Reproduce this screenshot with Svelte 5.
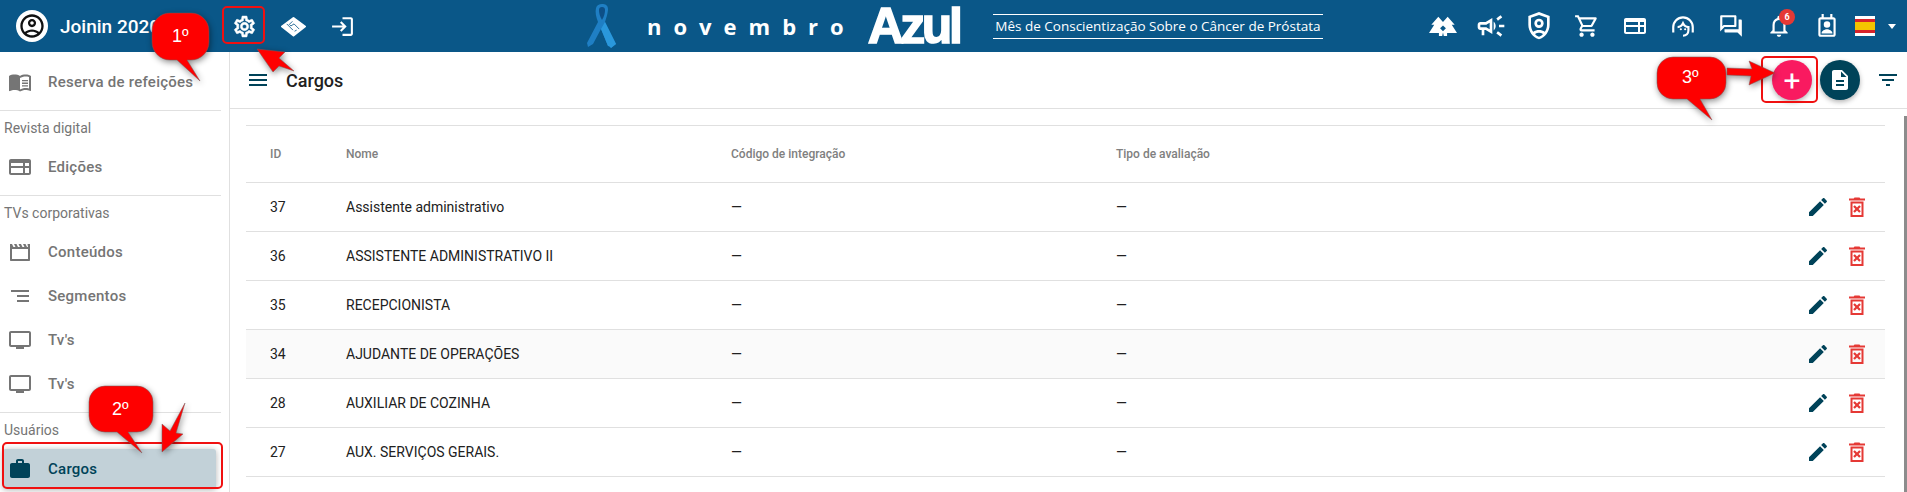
<script>
  const rows = [
    { id: 37, nome: 'Assistente administrativo' },
    { id: 36, nome: 'ASSISTENTE ADMINISTRATIVO II' },
    { id: 35, nome: 'RECEPCIONISTA' },
    { id: 34, nome: 'AJUDANTE DE OPERAÇÕES', hover: true },
    { id: 28, nome: 'AUXILIAR DE COZINHA' },
    { id: 27, nome: 'AUX. SERVIÇOS GERAIS.' }
  ];

  const icons = {
    book: 'M21 5c-1.1-.35-2.3-.5-3.5-.5-1.95 0-4.05.4-5.5 1.5-1.45-1.1-3.55-1.500-5.500-1.500S2.450 4.900 1 6v14.650c0 .25.25.5.5.5.1 0 .15-.05.25-.05C3.100 20.450 5.050 20 6.500 20c1.950 0 4.050.4 5.500 1.500 1.350-.85 3.800-1.500 5.500-1.500 1.650 0 3.350.3 4.750 1.050.1.05.15.05.25.05.25 0 .5-.25.5-.5V6c-.6-.45-1.250-.75-2-1zm0 13.500c-1.100-.35-2.300-.5-3.500-.5-1.700 0-4.150.65-5.500 1.500V8c1.350-.85 3.800-1.500 5.500-1.500 1.200 0 2.400.15 3.500.5v11.500zM14 9.900h6v1.400h-6zm0 2.700h6V14h-6zm0 2.600h6v1.400h-6z',
    news: 'M21 4H3c-1.100 0-2 .9-2 2v12c0 1.100.9 2 2 2h18c1.100 0 2-.9 2-2V6c0-1.100-.9-2-2-2zM3 11V8h12v3H3zm0 2h12v5H3v-5zm18 5h-4v-5h4v5zm0-7h-4V8h4v3z',
    movie: 'M2 4h2l1.500 3h2L6 4h2.500L10 7h2l-1.500-3H13l1.500 3h2L15 4h2.500L19 7h1l-.5-3H22v16c0 .6-.4 1-1 1H3c-.6 0-1-.4-1-1V4zm2 5v10h16V9H4z',
    sort: 'M3 6h18v2H3zm6 5h12v2H9zm0 5h12v2H9z',
    tv: 'M21 3H3c-1.100 0-2 .9-2 2v12c0 1.100.9 2 2 2h5v2h8v-2h5c1.100 0 1.990-.9 1.990-2L23 5c0-1.100-.9-2-2-2zm0 14H3V5h18v12z',
    work: 'M20 6h-4V4c0-1.110-.89-2-2-2h-4c-1.110 0-2 .89-2 2v2H4c-1.110 0-1.990.89-1.990 2L2 19c0 1.110.89 2 2 2h16c1.110 0 2-.89 2-2V8c0-1.110-.89-2-2-2zm-6 0h-4V4h4v2z',
    edit: 'M3 17.250V21h3.750L17.810 9.940l-3.750-3.750L3 17.250zM20.710 7.040c.39-.39.39-1.020 0-1.410l-2.340-2.340c-.39-.39-1.020-.39-1.410 0l-1.830 1.830 3.750 3.750 1.830-1.830z',
    trash: 'M9.500 2.500h5l.8 1H20v2H4v-2h4.700l.8-1zM5.500 6.500h13V22h-13V6.500zm2 2V20h9V8.500h-9zm2.300 1.700L12 12.400l2.200-2.200 1.600 1.600-2.200 2.200 2.200 2.200-1.600 1.600-2.200-2.200-2.200 2.200-1.600-1.600 2.200-2.200-2.200-2.200 1.600-1.600z',
    filter: 'M10 18h4v-2h-4v2zM3 6v2h18V6H3zm3 7h12v-2H6v2z',
    doc: 'M14 2H6c-1.100 0-2 .9-2 2v16c0 1.100.9 2 2 2h12c1.100 0 2-.9 2-2V8l-6-6zM8 18v-2h8v2H8zm0-4v-2h8v2H8zm5-5V3.500L18.500 9H13z',
    user: 'M12 2C6.480 2 2 6.480 2 12s4.480 10 10 10 10-4.480 10-10S17.520 2 12 2zM7.350 18.500C8.660 17.560 10.260 17 12 17s3.340.56 4.650 1.500c-1.310.94-2.910 1.500-4.650 1.500s-3.340-.56-4.650-1.500zm10.790-1.380C16.450 15.800 14.320 15 12 15s-4.450.8-6.140 2.120C4.700 15.730 4 13.950 4 12c0-4.420 3.580-8 8-8s8 3.580 8 8c0 1.950-.7 3.730-1.860 5.120zM12 6c-1.930 0-3.500 1.570-3.500 3.500S10.070 13 12 13s3.500-1.570 3.500-3.500S13.930 6 12 6zm0 5c-.83 0-1.500-.67-1.500-1.500S11.170 8 12 8s1.500.67 1.500 1.500S12.830 11 12 11z',
    gear: 'M19.430 12.980c.04-.32.07-.64.07-.98 0-.34-.03-.66-.07-.98l2.110-1.650c.19-.15.24-.42.12-.64l-2-3.460c-.09-.16-.26-.25-.44-.25-.06 0-.12.01-.17.03l-2.490 1c-.52-.4-1.080-.73-1.690-.98l-.38-2.650C14.460 2.180 14.250 2 14 2h-4c-.25 0-.46.18-.49.42l-.38 2.650c-.61.25-1.170.59-1.690.98l-2.490-1c-.06-.02-.12-.03-.18-.03-.17 0-.34.09-.43.25l-2 3.460c-.13.22-.07.49.12.64l2.110 1.650c-.04.32-.07.65-.07.98 0 .33.03.66.07.98l-2.110 1.650c-.19.15-.24.42-.12.64l2 3.460c.09.16.26.25.44.25.06 0 .12-.01.17-.03l2.490-1c.52.4 1.080.73 1.690.98l.38 2.650c.03.24.24.42.49.42h4c.25 0 .46-.18.49-.42l.38-2.650c.61-.25 1.170-.59 1.690-.98l2.490 1c.06.02.12.03.18.03.17 0 .34-.09.43-.25l2-3.460c.12-.22.07-.49-.12-.64l-2.110-1.650zm-1.980-1.710c.04.31.05.52.05.73 0 .21-.02.43-.05.73l-.14 1.130.89.7 1.080.84-.7 1.210-1.270-.51-1.040-.42-.9.68c-.43.32-.84.56-1.250.73l-1.060.43-.16 1.130-.2 1.350h-1.400l-.19-1.350-.16-1.130-1.060-.43c-.43-.18-.83-.41-1.230-.71l-.91-.7-1.060.43-1.270.51-.7-1.210 1.080-.84.89-.7-.14-1.130c-.03-.31-.05-.54-.05-.74s.02-.43.05-.73l.14-1.130-.89-.7-1.080-.84.7-1.210 1.270.51 1.040.42.9-.68c.43-.32.84-.56 1.250-.73l1.060-.43.16-1.130.2-1.350h1.390l.19 1.350.16 1.130 1.060.43c.43.18.83.41 1.230.71l.91.7 1.060-.43 1.270-.51.7 1.210-1.070.85-.89.7.14 1.130zM12 8c-2.210 0-4 1.790-4 4s1.790 4 4 4 4-1.790 4-4-1.790-4-4-4zm0 6c-1.100 0-2-.9-2-2s.9-2 2-2 2 .9 2 2-.9 2-2 2z',
    login: 'M11 7L9.600 8.400l2.600 2.600H2v2h10.200l-2.600 2.600L11 17l5-5-5-5zm9 12h-8v2h8c1.100 0 2-.9 2-2V5c0-1.100-.9-2-2-2h-8v2h8v14z',
    arrows: 'M8 4l4 4.500L16 4l6 7h-2.500l4.500 7h-8.500v2.500h-2.800L12 17.500l-.7 3H8.500V18H0l4.500-7H2l6-7zm4 7.500L9.500 14l2.500 2.500 2.500-2.500-2.500-2.500z',
    campaign: 'M18 11v2h4v-2h-4zm-2 6.610c.96.71 2.210 1.650 3.200 2.390.4-.53.8-1.070 1.200-1.600-.99-.74-2.240-1.680-3.200-2.400-.4.54-.8 1.080-1.200 1.610zM20.400 5.600c-.4-.53-.8-1.070-1.200-1.600-.99.74-2.240 1.680-3.200 2.400.4.53.8 1.070 1.200 1.600.96-.72 2.210-1.650 3.200-2.400zM4 9c-1.100 0-2 .9-2 2v2c0 1.100.9 2 2 2h1v4h2v-4h1l5 3V6L8 9H4zm5.030 1.710L11 9.530v4.940l-1.970-1.180-.48-.29H4v-2h4.550l.48-.29zM15.500 12c0-1.330-.58-2.530-1.500-3.350v6.690c.92-.81 1.500-2.010 1.500-3.340z',
    shield: 'M12 1.500L4 4.500V11c0 5 3.400 9.700 8 11 4.600-1.300 8-6 8-11V4.500l-8-3zm6 9.500c0 1.900-.6 3.800-1.600 5.300-1.300-.8-2.800-1.300-4.400-1.300s-3.100.5-4.400 1.300C6.600 14.800 6 12.900 6 11V5.900l6-2.200 6 2.200V11zM12 6.500a3.500 3.500 0 1 0 0 7 3.500 3.500 0 0 0 0-7zm0 5a1.500 1.500 0 1 1 0-3 1.500 1.500 0 0 1 0 3zM9 18c.9-.5 1.900-.9 3-.9s2.100.4 3 .9c-.8 1-1.900 1.700-3 2-1.100-.3-2.200-1-3-2z',
    cart: 'M15.550 13c.75 0 1.410-.41 1.750-1.030l3.580-6.490c.37-.66-.11-1.480-.87-1.480H5.210l-.94-2H1v2h2l3.600 7.590-1.350 2.440C4.520 15.370 5.480 17 7 17h12v-2H7l1.100-2h7.450zM6.160 6h12.150l-2.760 5H8.530L6.160 6zM7 18c-1.100 0-1.990.9-1.990 2S5.900 22 7 22s2-.9 2-2-.9-2-2-2zm10 0c-1.100 0-1.990.9-1.990 2s.89 2 1.990 2 2-.9 2-2-.9-2-2-2z',
    forum: 'M15 4v7H5.170L4 12.170V4h11m1-2H3c-.55 0-1 .45-1 1v14l4-4h10c.55 0 1-.45 1-1V3c0-.55-.45-1-1-1zm5 4h-2v9H6v2c0 .55.45 1 1 1h11l4 4V7c0-.55-.45-1-1-1z',
    bell: 'M12 22c1.100 0 2-.9 2-2h-4c0 1.100.9 2 2 2zm6-6v-5c0-3.070-1.630-5.640-4.500-6.320V4c0-.83-.67-1.500-1.500-1.500s-1.500.67-1.500 1.500v.68C7.640 5.360 6 7.920 6 11v5l-2 2v1h16v-1l-2-2zm-2 1H8v-6c0-2.480 1.510-4.500 4-4.500s4 2.020 4 4.500v6z',
    badge: 'M7 1h2v3h6V1h2v3h1c1.100 0 2 .9 2 2v14c0 1.100-.9 2-2 2H6c-1.100 0-2-.9-2-2V6c0-1.100.9-2 2-2h1V1zM6 6v14h12V6H6zm6 1.500a3 3 0 1 1 0 6 3 3 0 0 1 0-6zm-5 11c0-2 3-3.500 5-3.500s5 1.500 5 3.500v.5H7v-.5z'
  };

  const topIcons = ['arrows', 'campaign', 'shield', 'cart', 'news', 'support', 'forum', 'bell', 'badge'];
</script>

<div class="page">
  <header class="topbar">
    <div class="brand">
      <span class="avatar"><svg viewBox="0 0 24 24"><path d={icons.user} /></svg></span>
      <span class="brand-name">Joinin 2020</span>
    </div>
    <div class="top-left-icons">
      <svg viewBox="0 0 24 24"><path d={icons.gear} stroke="#fff" stroke-width="0.5" /></svg>
      <svg viewBox="0 0 24 24">
        <path d="M12 4L23 12 12 20.500 1 12z" stroke="#fff" stroke-width="2" stroke-linejoin="round" />
        <path d="M5.500 9.500l6 6M11 7l-3 3 1.500 1.500 3-2 5 5M13 16.500l2-1" fill="none" stroke="#0a5788" stroke-width="0.8" />
      </svg>
      <svg viewBox="0 0 24 24"><path d={icons.login} /></svg>
    </div>
    <div class="banner">
      <svg class="ribbon" viewBox="0 0 32 46">
        <path d="M15 1c3 0 6 1 6 5 0 4-2 10-3 13l11 22-5 4c-1-1-1-2-3-2L14 26 6 41l-5 3 -1-4 11-21C9 14 8 9 9 5c1-3 3-4 6-4z" fill="#1f7fc4" />
        <path d="M15 4c2 0 3 1 3 3 0 3-1 7-3 10-2-3-3-7-3-10 0-2 1-3 3-3z" fill="#0d4f87" />
        <path d="M18 19l11 22-5 4c-1-1-1-2-3-2L14 26z" fill="#2a98dc" />
      </svg>
      <span class="novembro">novembro</span>
      <span class="azul">Azul</span>
      <span class="slogan">Mês de Conscientização Sobre o Câncer de Próstata</span>
    </div>
    <div class="top-right-icons">
      {#each topIcons as name}
        <span class="top-icon i-{name}">
          {#if name === 'support'}
            <svg viewBox="0 0 24 24">
              <path d="M3 18v-5a9 9 0 0 1 18 0v5" fill="none" stroke="#fff" stroke-width="2" />
              <path d="M7 13c2.500 0 4-1.500 5-3.500 1 2 2.500 3.500 5 3.500v3c0 3-2 5-5 5" fill="none" stroke="#fff" stroke-width="2" />
              <circle cx="10" cy="15" r="1" />
              <circle cx="14" cy="15" r="1" />
            </svg>
          {:else}
            <svg viewBox="0 0 24 24"><path d={icons[name]} fill-rule="evenodd" /></svg>
          {/if}
          {#if name === 'bell'}<span class="badge-count">6</span>{/if}
        </span>
      {/each}
      <span class="flag"><span class="flag-mid"></span></span>
      <span class="caret"></span>
    </div>
  </header>

  <div class="body">
    <aside class="sidebar">
      <a class="item"><svg viewBox="0 0 24 24"><path d={icons.book} fill-rule="evenodd" /></svg>Reserva de refeições</a>
      <hr />
      <div class="group">Revista digital</div>
      <a class="item"><svg viewBox="0 0 24 24"><path d={icons.news} fill-rule="evenodd" /></svg>Edições</a>
      <hr />
      <div class="group">TVs corporativas</div>
      <a class="item"><svg viewBox="0 0 24 24"><path d={icons.movie} fill-rule="evenodd" /></svg>Conteúdos</a>
      <a class="item"><svg viewBox="0 0 24 24"><path d={icons.sort} /></svg>Segmentos</a>
      <a class="item"><svg viewBox="0 0 24 24"><path d={icons.tv} fill-rule="evenodd" /></svg>Tv's</a>
      <a class="item"><svg viewBox="0 0 24 24"><path d={icons.tv} fill-rule="evenodd" /></svg>Tv's</a>
      <hr />
      <div class="group">Usuários</div>
      <a class="item selected"><svg viewBox="0 0 24 24"><path d={icons.work} fill-rule="evenodd" /></svg>Cargos</a>
    </aside>

    <main class="content">
      <div class="toolbar">
        <svg class="menu" viewBox="0 0 24 24"><path d="M3 18h18v-2H3v2zm0-5h18v-2H3v2zm0-7v2h18V6H3z" /></svg>
        <h1>Cargos</h1>
        <span class="fab plus">+</span>
        <span class="fab doc"><svg viewBox="0 0 24 24"><path d={icons.doc} fill-rule="evenodd" /></svg></span>
        <svg class="filter" viewBox="0 0 24 24"><path d={icons.filter} /></svg>
      </div>

      <div class="table-wrap">
        <table>
          <thead>
            <tr><th class="c-id">ID</th><th class="c-nome">Nome</th><th class="c-cod">Código de integração</th><th>Tipo de avaliação</th><th class="c-act"></th></tr>
          </thead>
          <tbody>
            {#each rows as row}
              <tr class:hover={row.hover}>
                <td>{row.id}</td>
                <td>{row.nome}</td>
                <td>—</td>
                <td>—</td>
                <td class="actions">
                  <svg class="edit" viewBox="0 0 24 24"><path d={icons.edit} /></svg>
                  <svg class="trash" viewBox="0 0 24 24"><path d={icons.trash} fill-rule="evenodd" /></svg>
                </td>
              </tr>
            {/each}
          </tbody>
        </table>
      </div>
    </main>
  </div>

  <!-- setas e balões do tutorial por cima da tela -->
  <div class="mark mark-gear"></div>
  <div class="mark mark-cargos"></div>
  <div class="mark mark-plus"></div>

  <svg class="arrows-layer" viewBox="0 0 1907 492">
    <g fill="#fe0000" stroke="#7a5a5a" stroke-width="0.5" class="shadowed">
      <path d="M257 49l28 3-6 6 15 13-15-5-6 6z" />
      <path d="M162 452v-28l8 7 15-28-9 30 7 1z" />
      <path d="M1727 68l25 1-3-8 26 12-26 12 2-9-24-1z" />
      <path d="M170 13h21a18 18 0 0 1 18 18v11a18 18 0 0 1-18 18h-4l13 21-23-21h-7a18 18 0 0 1-18-18V31a18 18 0 0 1 18-18z" />
      <path d="M105 386h32a16 16 0 0 1 16 16v14a16 16 0 0 1-16 16h-9l14 21-25-21h-12a16 16 0 0 1-16-16v-14a16 16 0 0 1 16-16z" />
      <path d="M1673 57h37a16 16 0 0 1 16 16v10a16 16 0 0 1-16 16h-10l12 21-25-21h-14a16 16 0 0 1-16-16V73a16 16 0 0 1 16-16z" />
    </g>
  </svg>
  <span class="bubble-text b1">1º</span>
  <span class="bubble-text b2">2º</span>
  <span class="bubble-text b3">3º</span>

  <div class="scrollbar"></div>
</div>

<style>
  :global(body) {
    margin: 0;
    background: #fff;
    font-family: Roboto, "Liberation Sans", sans-serif;
  }

  .page {
    position: relative;
    width: 1907px;
    height: 492px;
    overflow: hidden;
  }

  .topbar {
    height: 52px;
    background: #0a5788;
    display: flex;
    align-items: center;
    color: #fff;
  }

  .brand {
    display: flex;
    align-items: center;
    width: 222px;
    padding-left: 16px;
    box-sizing: border-box;
    flex: none;
  }

  .avatar {
    width: 32px;
    height: 32px;
    border-radius: 50%;
    background: #fff;
    display: flex;
    align-items: center;
    justify-content: center;
    flex: none;
  }

  .avatar svg {
    width: 28px;
    height: 28px;
    fill: #111;
  }

  .brand-name {
    margin-left: 12px;
    font-size: 19px;
    font-weight: 500;
    white-space: nowrap;
  }

  .top-left-icons {
    display: flex;
    gap: 24px;
    padding-left: 10px;
    width: 130px;
    flex: none;
    box-sizing: content-box;
    margin-right: -10px;
  }

  .top-left-icons svg {
    width: 25px;
    height: 25px;
    fill: #fff;
  }

  .banner {
    display: flex;
    align-items: center;
    margin-left: 235px;
    flex: none;
    height: 52px;
  }

  .ribbon {
    width: 32px;
    height: 46px;
    flex: none;
  }

  .novembro {
    margin-left: 28px;
    font-family: "Open Sans", sans-serif;
    font-weight: 700;
    font-size: 22px;
    letter-spacing: 12px;
    flex: none;
  }

  .azul {
    margin-left: 12px;
    font-family: "Liberation Sans", sans-serif;
    font-weight: 700;
    font-size: 50px;
    letter-spacing: -3.500px;
    -webkit-text-stroke: 1.500px #fff;
    line-height: 52px;
    flex: none;
  }

  .slogan {
    margin-left: 34px;
    font-family: "Open Sans", sans-serif;
    font-size: 13.500px;
    line-height: 23px;
    padding: 0 2px;
    border-top: 1px solid #fff;
    border-bottom: 1px solid #fff;
    white-space: nowrap;
    flex: none;
  }

  .top-right-icons {
    margin-left: auto;
    display: flex;
    align-items: center;
    padding-right: 11px;
    flex: none;
  }

  .top-icon {
    position: relative;
    width: 48px;
    height: 32px;
    display: flex;
    align-items: center;
    justify-content: center;
  }

  .top-icon svg {
    width: 26px;
    height: 26px;
    fill: #fff;
  }

  .i-arrows svg {
    width: 28px;
    height: 28px;
  }

  .i-campaign svg,
  .i-shield svg {
    width: 32px;
    height: 32px;
  }

  .i-news svg {
    width: 24px;
    height: 24px;
  }

  .badge-count {
    position: absolute;
    top: -1px;
    left: 24px;
    width: 16px;
    height: 16px;
    border-radius: 50%;
    background: #e53935;
    font-size: 9px;
    font-weight: 700;
    line-height: 16px;
    text-align: center;
  }

  .flag {
    width: 20px;
    height: 20px;
    box-sizing: border-box;
    background: #d8232a;
    display: flex;
    align-items: center;
    margin-left: 4px;
    border: solid #fff;
    border-width: 3px 0;
  }

  .flag-mid {
    display: block;
    width: 100%;
    height: 8px;
    background: #f5c400;
  }

  .caret {
    margin-left: 13px;
    border: 4.500px solid transparent;
    border-top: 5px solid #fff;
    border-bottom: 0;
  }

  .body {
    display: flex;
    height: 440px;
  }

  .sidebar {
    width: 230px;
    flex: none;
    box-sizing: border-box;
    padding: 8px 8px 0 0;
    border-right: 1px solid #e0e0e0;
  }

  .sidebar hr {
    margin: 6px 0 0;
    border: 0;
    border-top: 1px solid #e0e0e0;
  }

  .group {
    height: 34px;
    line-height: 34px;
    padding-left: 4px;
    font-size: 14px;
    color: #757575;
  }

  .item {
    height: 44px;
    display: flex;
    align-items: center;
    font-size: 15px;
    font-weight: 500;
    letter-spacing: 0.25px;
    color: #757575;
  }

  .item svg {
    width: 24px;
    height: 24px;
    margin: 0 16px 0 8px;
    fill: #757575;
    flex: none;
  }

  .selected {
    height: 40px;
    margin: 2px 5px 0 3px;
    background: #c2d1d8;
    border-radius: 3px;
    color: #004359;
    box-shadow: 0 1px 6px rgba(0, 0, 0, 0.3);
  }

  .selected svg {
    fill: #004359;
    margin-left: 5px;
  }

  .content {
    flex: 1;
    min-width: 0;
  }

  .toolbar {
    height: 56px;
    border-bottom: 1px solid #e0e0e0;
    display: flex;
    align-items: center;
    padding-left: 16px;
    padding-right: 7px;
  }

  .menu {
    width: 24px;
    height: 24px;
    fill: #004359;
  }

  h1 {
    margin: 0 0 0 16px;
    font-size: 18px;
    font-weight: 500;
    color: #212121;
    flex: 1;
  }

  .fab {
    width: 40px;
    height: 40px;
    border-radius: 50%;
    display: flex;
    align-items: center;
    justify-content: center;
    box-shadow: 0 2px 5px rgba(0, 0, 0, 0.3);
    flex: none;
  }

  .plus {
    background: #f91a60;
    color: #fff;
    font-size: 30px;
    font-weight: 400;
  }

  .doc {
    background: #004359;
    margin-left: 8px;
  }

  .doc svg {
    width: 24px;
    height: 24px;
    fill: #fff;
  }

  .filter {
    width: 24px;
    height: 24px;
    fill: #004359;
    margin-left: 16px;
  }

  .table-wrap {
    padding: 16px 22px 0 16px;
  }

  table {
    width: 100%;
    border-collapse: collapse;
    border-top: 1px solid #e0e0e0;
    table-layout: fixed;
  }

  th {
    height: 56px;
    padding: 0;
    text-align: left;
    font-size: 12px;
    font-weight: 500;
    color: #808080;
  }

  th:first-child,
  td:first-child {
    padding-left: 24px;
  }

  .c-id {
    width: 100px;
    box-sizing: border-box;
  }

  .c-nome,
  .c-cod {
    width: 385px;
  }

  .c-act {
    width: 110px;
  }

  tr {
    border-bottom: 1px solid #e0e0e0;
  }

  td {
    height: 48px;
    padding: 0;
    font-size: 14px;
    color: #212121;
  }

  tr.hover {
    background: #fafafa;
  }

  .actions {
    text-align: right;
    padding-right: 16px;
  }

  .actions svg {
    vertical-align: middle;
  }

  .edit {
    width: 24px;
    height: 24px;
    fill: #004359;
  }

  .trash {
    width: 24px;
    height: 24px;
    fill: #e53935;
    margin-left: 12px;
  }

  .mark {
    position: absolute;
    box-sizing: border-box;
    border: 2px solid #f01010;
    border-radius: 5px;
  }

  .mark-gear {
    left: 222px;
    top: 6px;
    width: 43px;
    height: 38px;
  }

  .mark-cargos {
    left: 2px;
    top: 442px;
    width: 221px;
    height: 47px;
  }

  .mark-plus {
    left: 1761px;
    top: 56px;
    width: 57px;
    height: 47px;
  }

  .arrows-layer {
    position: absolute;
    left: 0;
    top: 0;
    width: 1907px;
    height: 492px;
    pointer-events: none;
  }

  .shadowed {
    filter: drop-shadow(1px 2px 3px rgba(0, 0, 0, 0.45));
  }

  .bubble-text {
    position: absolute;
    color: #fff;
    font-family: "Liberation Sans", sans-serif;
    font-size: 18px;
  }

  .b1 {
    left: 172px;
    top: 26px;
  }

  .b2 {
    left: 112px;
    top: 399px;
  }

  .b3 {
    left: 1682px;
    top: 67px;
  }

  .scrollbar {
    position: absolute;
    right: 0;
    top: 116px;
    width: 3px;
    bottom: 0;
    background: #8c8c8c;
  }
</style>
